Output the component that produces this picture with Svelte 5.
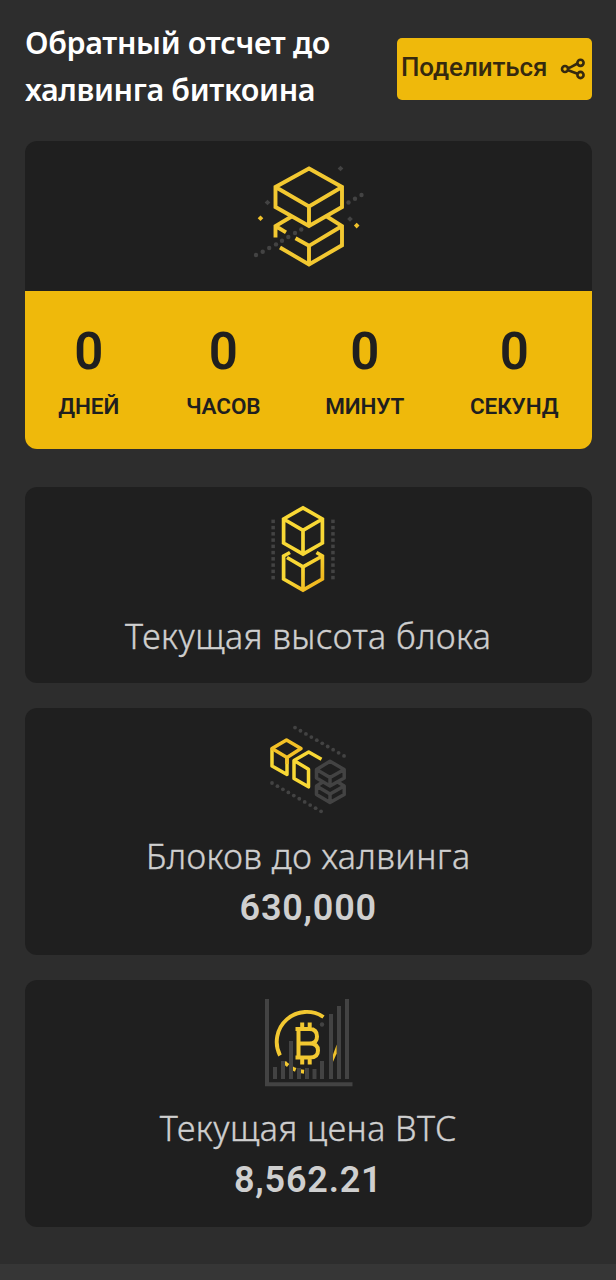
<script lang="ts">
  const units = [
    { value: 0, label: 'ДНЕЙ', width: 62 },
    { value: 0, label: 'ЧАСОВ', width: 73 },
    { value: 0, label: 'МИНУТ', width: 76 },
    { value: 0, label: 'СЕКУНД', width: 89 },
  ];

  const trail = [[16, 100], [22.7, 96.7], [29.2, 93], [36, 89.4], [42, 85.7], [48.3, 82], [55, 78], [61.3, 74.5], [108.5, 47.5], [115, 43.7], [121.5, 40]];
  const sparks = [[100.5, 13.5], [27.5, 47.5], [110, 64]];
  const rows = Array.from({ length: 10 }, (_, i) => i);
  const bars = [[20, 77], [28, 71], [36, 51], [44, 78], [52, 78], [59.5, 79], [67, 71], [76, 24], [84, 16], [92, 9]];
</script>

<main>
  <header>
    <h1>Обратный отсчет до<br />халвинга биткоина</h1>
    <button class="share">
      <span>Поделиться</span>
      <svg width="26" height="24" viewBox="0 0 26 24" fill="none" stroke="currentColor" stroke-width="2.6">
        <path d="M7.5 11 10 10.6 17.5 6.5M7.5 13 17.5 16.8" />
        <circle cx="5" cy="12" r="3" />
        <circle cx="20.5" cy="5.8" r="3.1" />
        <circle cx="20.5" cy="18" r="3.1" />
      </svg>
    </button>
  </header>

  <section class="timer">
    <div class="timer-art">
      <svg width="140" height="120" viewBox="0 0 140 120">
        <g class="yellow" stroke-width="3.9">
          <path d="M69 13.5 102 32V52L69 71 35.5 52V32ZM35.5 32 69 51.5 102 32M69 51.5V71" />
          <path d="M52.5 61 35.5 71V82.5M35.5 71 46 77.3M86 61 102 71V90.3L69 109.5 40 92.5M55.5 83.3 69 90.8 102 71M69 90.8V109.5" />
        </g>
        {#each trail as [x, y]}
          <circle class="dot" cx={x} cy={y} r="2.2" />
        {/each}
        {#each sparks as [x, y]}
          <path class="dot" d="M{x} {y - 2.8}l2.8 2.8-2.8 2.8-2.8-2.8z" />
        {/each}
        <path class="spark" d="M20.5 60.5l2.8 2.8-2.8 2.8-2.8-2.8zM116.7 67.8l2.8 2.8-2.8 2.8-2.8-2.8z" />
      </svg>
    </div>
    <div class="units">
      {#each units as unit}
        <div class="unit" style="width: {unit.width}px">
          <strong>{unit.value}</strong>
          <span>{unit.label}</span>
        </div>
      {/each}
    </div>
  </section>

  <section class="card height">
    <svg width="90" height="105" viewBox="0 0 90 105">
      <defs>
        <linearGradient id="gold" x1="0" y1="0" x2="1" y2="1">
          <stop offset="0.4" stop-color="#f8d835" />
          <stop offset="0.9" stop-color="#f0b51c" />
        </linearGradient>
      </defs>
      <path fill="none" stroke="#f8d835" stroke-width="3.7" d="M43 12.8 62.4 24V48L43 59.2 23.6 48V24ZM23.6 24 43 35.4 62.4 24M43 35.4V59.2" />
      <path fill="none" stroke="url(#gold)" stroke-width="3.7" d="M30 57.5 23.6 61V84L43 95.2 62.4 84V61L56.5 57.5M27 62.5 43 71.8 62.4 61M43 71.8V95.2" />
      {#each rows as i}
        <rect class="dot" x="11.4" y={24.6 + i * 6.25} width="3.5" height="3.5" />
        <rect class="dot" x="71.2" y={24.6 + i * 6.25} width="3.5" height="3.5" />
      {/each}
    </svg>
    <h2>Текущая высота блока</h2>
  </section>

  <section class="card blocks">
    <svg width="110" height="105" viewBox="0 0 110 105">
      <g fill="none" stroke-width="3.5" stroke-linejoin="round">
        <path stroke="#f8d835" d="M32 43.5V60.5L17 52V34.5" />
        <path stroke="#f3c126" d="M17 34.5 31.5 26 46 34.5 32 43.5ZM32 43.5V50" />
        <path stroke="#f8d835" d="M66.5 45.2 53.7 38 39 46.5V64.5L53.5 72.8V55.3L39 46.5" />
        <path stroke="#434343" d="M75 47.3 89.2 55.5V64L75 72 61.5 64V55.5ZM61.5 55.5 75 63.5 89.2 55.5M75 63.5V72M67 68.5 61.5 72V80.5L75 88.5 89.2 80.5V72L83.5 68.5M61.5 72 75 80 89.2 72M75 80V88.5" />
      </g>
      {#each rows as i}
        <circle class="dot" cx={40 + i * 5.45} cy={13.6 + i * 3.15} r="1.9" />
        <circle class="dot" cx={17 + i * 5.45} cy={69 + i * 3.15} r="1.9" />
      {/each}
    </svg>
    <h2>Блоков до халвинга</h2>
    <p>630,000</p>
  </section>

  <section class="card price">
    <svg width="105" height="105" viewBox="0 0 105 105">
      <g class="yellow" stroke-width="3.9">
        <path d="M68.5 27A30 30 0 0 0 25 65.5" />
        <path stroke-dasharray="5 3.6" d="M29.5 72.2A30 30 0 0 0 49.5 81.8" />
      </g>
      <path class="spark" d="M81.7 54.5V63.500L77.500 73V66z" />
      <g fill="#434343">
        <path d="M10 9h4v83.3h83.5v4H10z" />
        {#each bars as [x, y]}
          <rect x={x - 2} {y} width="4" height={89 - y} />
        {/each}
        <circle cx="67" cy="34.5" r="2.2" />
      </g>
      <path class="yellow" stroke-width="4" d="M40.5 39H54.5Q62 39 62 46.5 62 53.5 54.5 53.5H43.5M54.5 53.5Q63 53.5 63 60.5 63 67.5 55 67.5H40.5M43.5 39V67.5M47.2 32.5V38M54.7 32.5V38M47.2 68V74.5M54.7 68V74.5" />
    </svg>
    <h2>Текущая цена BTC</h2>
    <p>8,562.21</p>
  </section>
</main>
<div class="page-end"></div>

<style>
  :global(body) {
    background: #2d2d2d;
  }

  main {
    box-sizing: border-box;
    height: 1264px;
    padding: 20px 24.5px 0 25px;
    font-family: 'Noto Sans', 'Open Sans', sans-serif;
    color: #cfcfcf;
  }

  svg {
    display: block;
    flex: none;
  }

  header {
    display: flex;
    justify-content: space-between;
    height: 121px;
  }

  h1 {
    margin: -1px 0 0;
    font-size: 30.5px;
    font-weight: 600;
    line-height: 47px;
    letter-spacing: -0.35px;
    color: #fff;
    white-space: nowrap;
  }

  .share {
    box-sizing: border-box;
    display: flex;
    align-items: center;
    justify-content: space-between;
    width: 194.5px;
    height: 62px;
    margin-top: 18px;
    padding: 0 6px 0 4px;
    border: none;
    border-radius: 5px;
    background: #efb90b;
    color: #35290f;
    font: 500 26px Roboto, sans-serif;
    letter-spacing: -0.1px;
    white-space: nowrap;
  }

  .share span {
    margin-top: -4px;
  }

  .timer {
    height: 308px;
    border-radius: 12px;
    background: #1f1f1f;
    overflow: hidden;
  }

  .timer-art {
    height: 150px;
    padding: 14px 0 0 215px;
    box-sizing: border-box;
  }

  .units {
    display: flex;
    justify-content: center;
    gap: 67px;
    height: 158px;
    background: #efb90b;
    color: #1f1f1f;
    font-family: Roboto, sans-serif;
  }

  .unit {
    display: flex;
    flex-direction: column;
    align-items: center;
    white-space: nowrap;
  }

  .unit strong {
    margin-top: 31px;
    font-size: 51px;
    font-weight: 600;
    line-height: 60px;
  }

  .unit span {
    margin-top: 9px;
    font-size: 22.5px;
    font-weight: 600;
    line-height: 30px;
    letter-spacing: -0.1px;
  }

  .card {
    display: flex;
    flex-direction: column;
    align-items: center;
    height: 247px;
    margin-top: 25px;
    border-radius: 12px;
    background: #1f1f1f;
  }

  .card.height {
    height: 196px;
    margin-top: 38px;
  }

  .card svg {
    margin-top: 8px;
  }

  .card.height svg {
    margin-right: 6px;
  }

  .card.blocks svg {
    margin-top: 6px;
    margin-left: 4px;
  }

  .card.price svg {
    margin-top: 10px;
    margin-right: 2px;
  }

  h2 {
    margin: 11px 0 0;
    font-size: 34px;
    font-weight: 300;
    line-height: 50px;
    letter-spacing: 0.5px;
    white-space: nowrap;
    -webkit-text-stroke: 0.4px currentColor;
  }

  .blocks h2 {
    margin-top: 12px;
  }

  .price h2 {
    margin-top: 8px;
  }

  p {
    margin: 2px 0 0;
    font-family: Roboto, sans-serif;
    font-size: 36px;
    font-weight: 600;
    line-height: 50px;
    letter-spacing: 0.8px;
  }

  .yellow {
    fill: none;
    stroke: #f2c831;
  }

  .dot {
    fill: #434343;
  }

  .spark {
    fill: #efc12b;
  }

  .page-end {
    height: 16px;
    background: #363636;
  }
</style>
